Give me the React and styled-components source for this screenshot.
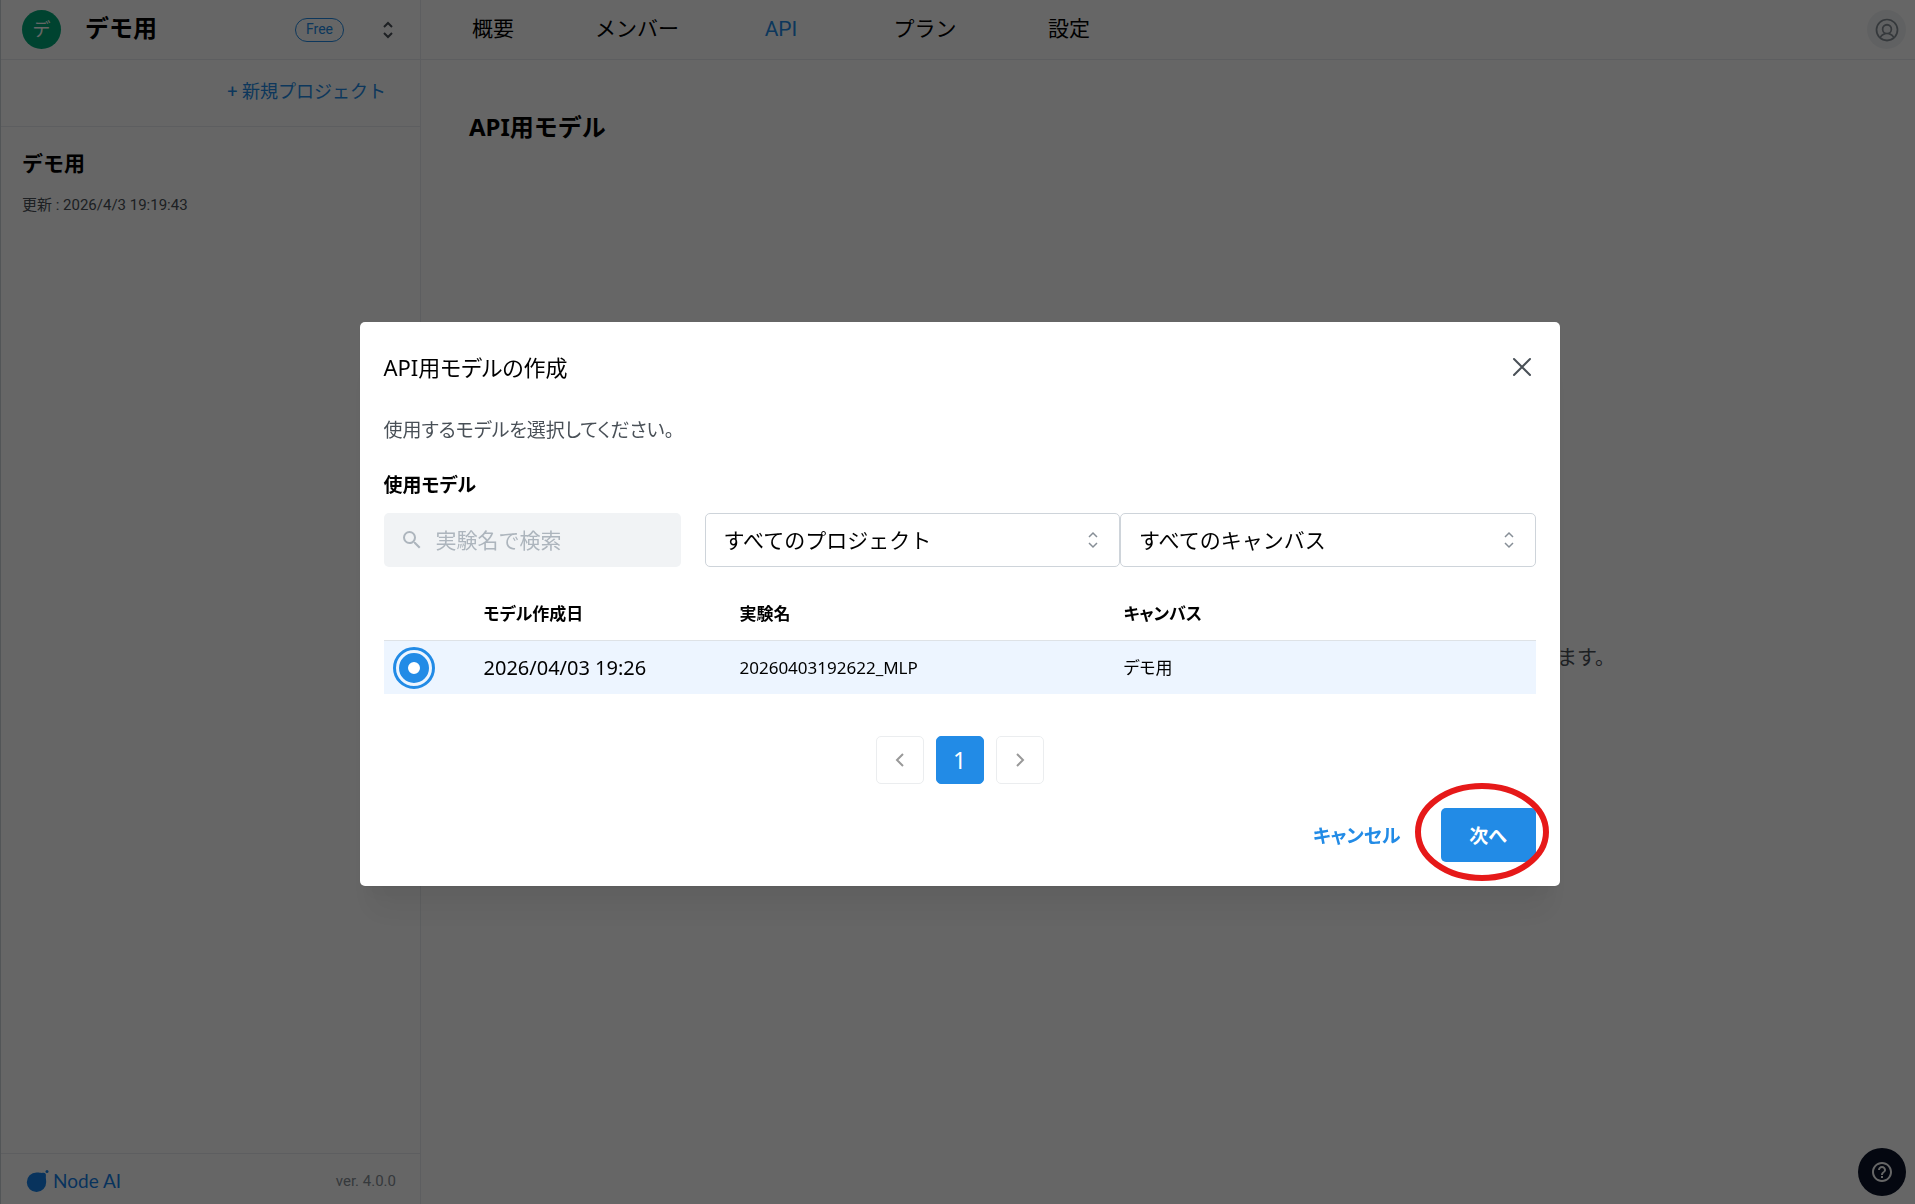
import React from 'react';
import styled, { createGlobalStyle } from 'styled-components';
import { MdHelpOutline, MdSearch } from 'react-icons/md';
import { PiUserCircle } from 'react-icons/pi';

const blue = '#228be6';

const grays = {
	lightest: '#f1f3f5',
	lighter: '#e9ecef',
	light: '#dee2e6',
	border: '#ced4da',
	placeholder: '#adb5bd',
	medium: '#868e96',
	dark: '#495057',
};

const bodyFont = `Roboto, 'Noto Sans CJK JP', sans-serif`;
const dialogFont = `'Noto Sans', 'Noto Sans CJK JP', sans-serif`;

const GlobalStyle = createGlobalStyle`
	*, *::before, *::after {
		box-sizing: border-box;
	}

	body {
		margin: 0;
		background: #fff;
		color: #000;
		font-family: ${bodyFont};
	}

	button, input, select {
		margin: 0;
		font-family: inherit;
	}

	h1, h2, h3, p {
		margin: 0;
	}
`;

const Page = styled.div`
	display: flex;
	min-height: 100vh;
	border-left: 1px solid ${grays.border};
`;

const Sidebar = styled.aside`
	display: flex;
	flex-direction: column;
	flex: 0 0 420px;
	border-right: 1px solid ${grays.lighter};
`;

const TeamBar = styled.div`
	display: flex;
	align-items: center;
	height: 60px;
	padding: 0 16px 0 21px;
	border-bottom: 1px solid ${grays.lighter};
`;

const TeamAvatar = styled.div`
	display: flex;
	align-items: center;
	justify-content: center;
	width: 39px;
	height: 39px;
	border-radius: 50%;
	background: #00a878;
	color: #fff;
	font-size: 18px;
	line-height: 1;
`;

const TeamName = styled.h1`
	flex: 1;
	margin-left: 24px;
	padding-bottom: 2px;
	font-size: 24px;
	line-height: 32px;
`;

const PlanBadge = styled.span`
	height: 24px;
	padding: 0 10px;
	border: 1px solid ${blue};
	border-radius: 12px;
	color: ${blue};
	font-size: 14px;
	line-height: 21px;
`;

const IconButton = styled.button`
	display: flex;
	align-items: center;
	justify-content: center;
	width: 32px;
	height: 32px;
	padding: 0;
	border: 0;
	background: none;
	color: ${grays.dark};
	cursor: pointer;
`;

const TeamSwitch = styled(IconButton)`
	margin-left: 28px;
`;

const NewProjectBar = styled.div`
	display: flex;
	align-items: center;
	justify-content: flex-end;
	height: 67px;
	padding: 0 34px 2px;
	border-bottom: 1px solid ${grays.lighter};
`;

const NewProjectButton = styled.button`
	padding: 0;
	border: 0;
	background: none;
	color: ${blue};
	font-size: 18px;
	line-height: 24px;
	cursor: pointer;
`;

const Project = styled.div`
	flex: 1;
	padding: 21px;
`;

const ProjectName = styled.h2`
	font-size: 21px;
	line-height: 32px;
`;

const ProjectDate = styled.p`
	margin-top: 13px;
	color: ${grays.dark};
	font-size: 15px;
	line-height: 24px;
`;

const SidebarFooter = styled.footer`
	display: flex;
	align-items: center;
	justify-content: space-between;
	height: 51px;
	padding: 4px 24px 0 25px;
	border-top: 1px solid ${grays.lighter};
`;

const Brand = styled.div`
	display: flex;
	align-items: center;
	gap: 4px;
	color: #1480e8;
	font-family: Lato, sans-serif;
	font-size: 19px;
	line-height: 24px;
`;

const Version = styled.span`
	color: ${grays.medium};
	font-size: 15px;
`;

const Main = styled.main`
	display: flex;
	flex-direction: column;
	flex: 1;
	min-width: 0;
`;

const TopBar = styled.header`
	display: flex;
	align-items: center;
	justify-content: space-between;
	height: 60px;
	padding-right: 9px;
	border-bottom: 1px solid ${grays.lighter};
`;

const Nav = styled.nav`
	display: flex;
	padding-bottom: 2px;
`;

const NavLink = styled.a`
	width: 144px;
	color: ${(props) => (props.$active ? blue : '#000')};
	font-size: 21px;
	line-height: 32px;
	text-align: center;
	text-decoration: none;
`;

const UserButton = styled(IconButton)`
	width: 39px;
	height: 39px;
	border-radius: 50%;
	background: ${grays.lightest};
	color: ${grays.medium};
`;

const PageTitle = styled.h2`
	padding: 50px 48px 0;
	font-family: ${dialogFont};
	font-size: 24px;
	line-height: 34px;
`;

const EmptyMessage = styled.p`
	display: flex;
	flex: 1;
	align-items: center;
	justify-content: flex-end;
	padding: 0 300px 36px 0;
	color: ${grays.dark};
	font-size: 20px;
`;

const HelpButton = styled.button`
	position: fixed;
	right: 9px;
	bottom: 8px;
	display: flex;
	align-items: center;
	justify-content: center;
	width: 48px;
	height: 48px;
	padding: 0;
	border: 0;
	border-radius: 50%;
	background: #0a1228;
	color: #fff;
`;

const Overlay = styled.div`
	position: fixed;
	inset: 0;
	display: flex;
	align-items: center;
	justify-content: center;
	padding: 28px 20px 24px 24px;
	background: rgba(0, 0, 0, 0.6);
`;

const Dialog = styled.div`
	width: 1200px;
	max-width: 100%;
	padding: 24px;
	border-radius: 5px;
	background: #fff;
	box-shadow: 0 1px 3px rgba(0, 0, 0, 0.05),
		0 36px 28px -7px rgba(0, 0, 0, 0.05), 0 17px 17px -7px rgba(0, 0, 0, 0.04);
	font-family: ${dialogFont};
	font-feature-settings: 'palt';
`;

const DialogHeader = styled.div`
	display: flex;
	align-items: center;
	justify-content: space-between;
	height: 45px;
	padding-bottom: 3px;
`;

const DialogTitle = styled.h2`
	font-size: 22px;
	font-weight: 400;
	line-height: 32px;
`;

const CloseButton = styled(IconButton)`
	margin-right: -2px;
`;

const Description = styled.p`
	margin-top: 24px;
	color: ${grays.dark};
	font-size: 19px;
	line-height: 30px;
`;

const FieldTitle = styled.h3`
	margin: 24px 0 12px;
	font-size: 19px;
	line-height: 32px;
`;

const Filters = styled.div`
	display: flex;
	font-feature-settings: normal;
`;

const SearchBox = styled.label`
	display: flex;
	align-items: center;
	gap: 12px;
	width: 297px;
	height: 54px;
	margin-right: 24px;
	padding: 0 16px;
	border-radius: 5px;
	background: ${grays.lightest};
	color: ${grays.placeholder};
`;

const SearchInput = styled.input`
	flex: 1;
	min-width: 0;
	padding: 0;
	border: 0;
	outline: 0;
	background: none;
	font-size: 21px;

	&::placeholder {
		color: ${grays.placeholder};
		opacity: 1;
	}
`;

const SelectBox = styled.div`
	position: relative;
	flex: 1;
	color: ${grays.medium};

	> svg {
		position: absolute;
		top: 18px;
		right: 18px;
		pointer-events: none;
	}
`;

const Select = styled.select`
	width: 100%;
	height: 54px;
	padding: 0 48px 0 18px;
	border: 1px solid ${grays.border};
	border-radius: 5px;
	appearance: none;
	background: #fff;
	color: #000;
	font-size: 21px;
`;

const ModelTable = styled.table`
	width: 100%;
	margin-top: 24px;
	border-collapse: separate;
	border-spacing: 0;
	table-layout: fixed;
`;

const HeadCell = styled.th`
	width: ${(props) => props.$width || 'auto'};
	height: 50px;
	padding: 0 10px 4px;
	border-bottom: 1px solid ${grays.light};
	font-size: 17px;
	line-height: 24px;
	text-align: left;
`;

const Cell = styled.td`
	height: 53px;
	padding: 0 10px;
	background: #edf5ff;
	font-size: ${(props) => (props.$large ? 20 : 17)}px;
	line-height: 24px;
`;

const Radio = styled.input`
	display: block;
	width: 30px;
	height: 30px;
	margin: 0 5px;
	border: 9px solid ${blue};
	border-radius: 50%;
	appearance: none;
	background: #fff;
	outline: 3px solid ${blue};
	outline-offset: 3px;
`;

const Pagination = styled.nav`
	display: flex;
	justify-content: center;
	gap: 12px;
	margin-top: 42px;
`;

const PageButton = styled.button`
	display: flex;
	align-items: center;
	justify-content: center;
	width: 48px;
	height: 48px;
	padding: 0;
	border: 1px solid ${(props) => (props.$active ? blue : '#ebedef')};
	border-radius: 5px;
	background: ${(props) => (props.$active ? blue : '#fff')};
	color: ${(props) => (props.$active ? '#fff' : '#999')};
	font-size: 23px;
`;

const DialogFooter = styled.div`
	display: flex;
	justify-content: flex-end;
	gap: 16px;
	margin-top: 24px;
`;

const Button = styled.button`
	height: 54px;
	padding: 0 24px;
	border: 0;
	border-radius: 5px;
	background: none;
	color: ${blue};
	font-size: 19px;
	font-weight: 700;
	font-feature-settings: inherit;
	cursor: pointer;
`;

const NextButton = styled(Button)`
	width: 95px;
	background: ${blue};
	color: #fff;
`;

const NextArea = styled.div`
	position: relative;
`;

const Marker = styled.svg`
	position: absolute;
	top: -25px;
	left: -26px;
	width: 134px;
	height: 98px;
	pointer-events: none;
`;

const SelectorIcon = ({ size, stroke }) => (
	<svg
		width={size}
		height={size}
		viewBox="0 0 18 18"
		fill="none"
		stroke="currentColor"
		strokeWidth={stroke}
	>
		<path d="M5 6 9 2l4 4M5 12l4 4 4-4" />
	</svg>
);

const ChevronIcon = ({ d }) => (
	<svg
		width="24"
		height="24"
		viewBox="0 0 24 24"
		fill="none"
		stroke="currentColor"
		strokeWidth="2"
	>
		<path d={d} />
	</svg>
);

const CloseIcon = () => (
	<svg
		width="24"
		height="24"
		viewBox="0 0 24 24"
		fill="none"
		stroke="currentColor"
		strokeWidth="2"
		strokeLinecap="round"
	>
		<path d="m4 4 16 16M20 4 4 20" />
	</svg>
);

const LogoIcon = () => (
	<svg width="23" height="23" viewBox="0 0 23 23" fill="currentColor">
		<path d="M10.500 2.500C13.500 2.300 15 3.200 17 2.800c2-.3 3.200.9 2.900 2.900-.3 2 .3 3.800.3 6.300a9.700 9.700 0 1 1-9.700-9.500Z" />
		<circle cx="21" cy="1.600" r="1.500" />
	</svg>
);

const navItems = ['概要', 'メンバー', 'API', 'プラン', '設定'];

const models = [
	{
		id: 1,
		createdAt: '2026/04/03 19:26',
		name: '20260403192622_MLP',
		canvas: 'デモ用',
	},
];

const ModelDialog = () => (
	<Dialog role="dialog" aria-modal="true" aria-labelledby="dialog-title">
		<DialogHeader>
			<DialogTitle id="dialog-title">API用モデルの作成</DialogTitle>
			<CloseButton aria-label="閉じる">
				<CloseIcon />
			</CloseButton>
		</DialogHeader>
		<Description>使用するモデルを選択してください。</Description>
		<FieldTitle>使用モデル</FieldTitle>
		<Filters>
			<SearchBox>
				<MdSearch size={24} />
				<SearchInput
					type="text"
					placeholder="実験名で検索"
					aria-label="実験名で検索"
				/>
			</SearchBox>
			<SelectBox>
				<Select aria-label="プロジェクト">
					<option>すべてのプロジェクト</option>
				</Select>
				<SelectorIcon size={18} stroke={1.5} />
			</SelectBox>
			<SelectBox>
				<Select aria-label="キャンバス">
					<option>すべてのキャンバス</option>
				</Select>
				<SelectorIcon size={18} stroke={1.5} />
			</SelectBox>
		</Filters>
		<ModelTable>
			<thead>
				<tr>
					<HeadCell $width="90px" />
					<HeadCell $width="256px">モデル作成日</HeadCell>
					<HeadCell $width="384px">実験名</HeadCell>
					<HeadCell>キャンバス</HeadCell>
				</tr>
			</thead>
			<tbody>
				{models.map((model) => (
					<tr key={model.id}>
						<Cell>
							<Radio
								type="radio"
								name="model"
								aria-label={model.name}
								defaultChecked
							/>
						</Cell>
						<Cell $large>{model.createdAt}</Cell>
						<Cell>{model.name}</Cell>
						<Cell>{model.canvas}</Cell>
					</tr>
				))}
			</tbody>
		</ModelTable>
		<Pagination>
			<PageButton aria-label="前へ">
				<ChevronIcon d="m15 6-6 6 6 6" />
			</PageButton>
			<PageButton $active>1</PageButton>
			<PageButton aria-label="次のページ">
				<ChevronIcon d="m9 6 6 6-6 6" />
			</PageButton>
		</Pagination>
		<DialogFooter>
			<Button>キャンセル</Button>
			<NextArea>
				<NextButton>次へ</NextButton>
				<Marker viewBox="0 0 134 98" fill="none" stroke="#e61919">
					<ellipse cx="67" cy="49" rx="64" ry="46" strokeWidth="6" />
				</Marker>
			</NextArea>
		</DialogFooter>
	</Dialog>
);

const App = () => (
	<>
		<GlobalStyle />
		<Page>
			<Sidebar>
				<TeamBar>
					<TeamAvatar>デ</TeamAvatar>
					<TeamName>デモ用</TeamName>
					<PlanBadge>Free</PlanBadge>
					<TeamSwitch aria-label="チーム切替">
						<SelectorIcon size={18} stroke={2} />
					</TeamSwitch>
				</TeamBar>
				<NewProjectBar>
					<NewProjectButton>+ 新規プロジェクト</NewProjectButton>
				</NewProjectBar>
				<Project>
					<ProjectName>デモ用</ProjectName>
					<ProjectDate>更新 : 2026/4/3 19:19:43</ProjectDate>
				</Project>
				<SidebarFooter>
					<Brand>
						<LogoIcon />
						Node AI
					</Brand>
					<Version>ver. 4.0.0</Version>
				</SidebarFooter>
			</Sidebar>
			<Main>
				<TopBar>
					<Nav>
						{navItems.map((item) => (
							<NavLink key={item} href="#" $active={item === 'API'}>
								{item}
							</NavLink>
						))}
					</Nav>
					<UserButton aria-label="アカウント">
						<PiUserCircle size={28} />
					</UserButton>
				</TopBar>
				<PageTitle>API用モデル</PageTitle>
				<EmptyMessage>ます。</EmptyMessage>
			</Main>
		</Page>
		<HelpButton aria-label="ヘルプ">
			<MdHelpOutline size={24} />
		</HelpButton>
		<Overlay>
			<ModelDialog />
		</Overlay>
	</>
);

export default App;
